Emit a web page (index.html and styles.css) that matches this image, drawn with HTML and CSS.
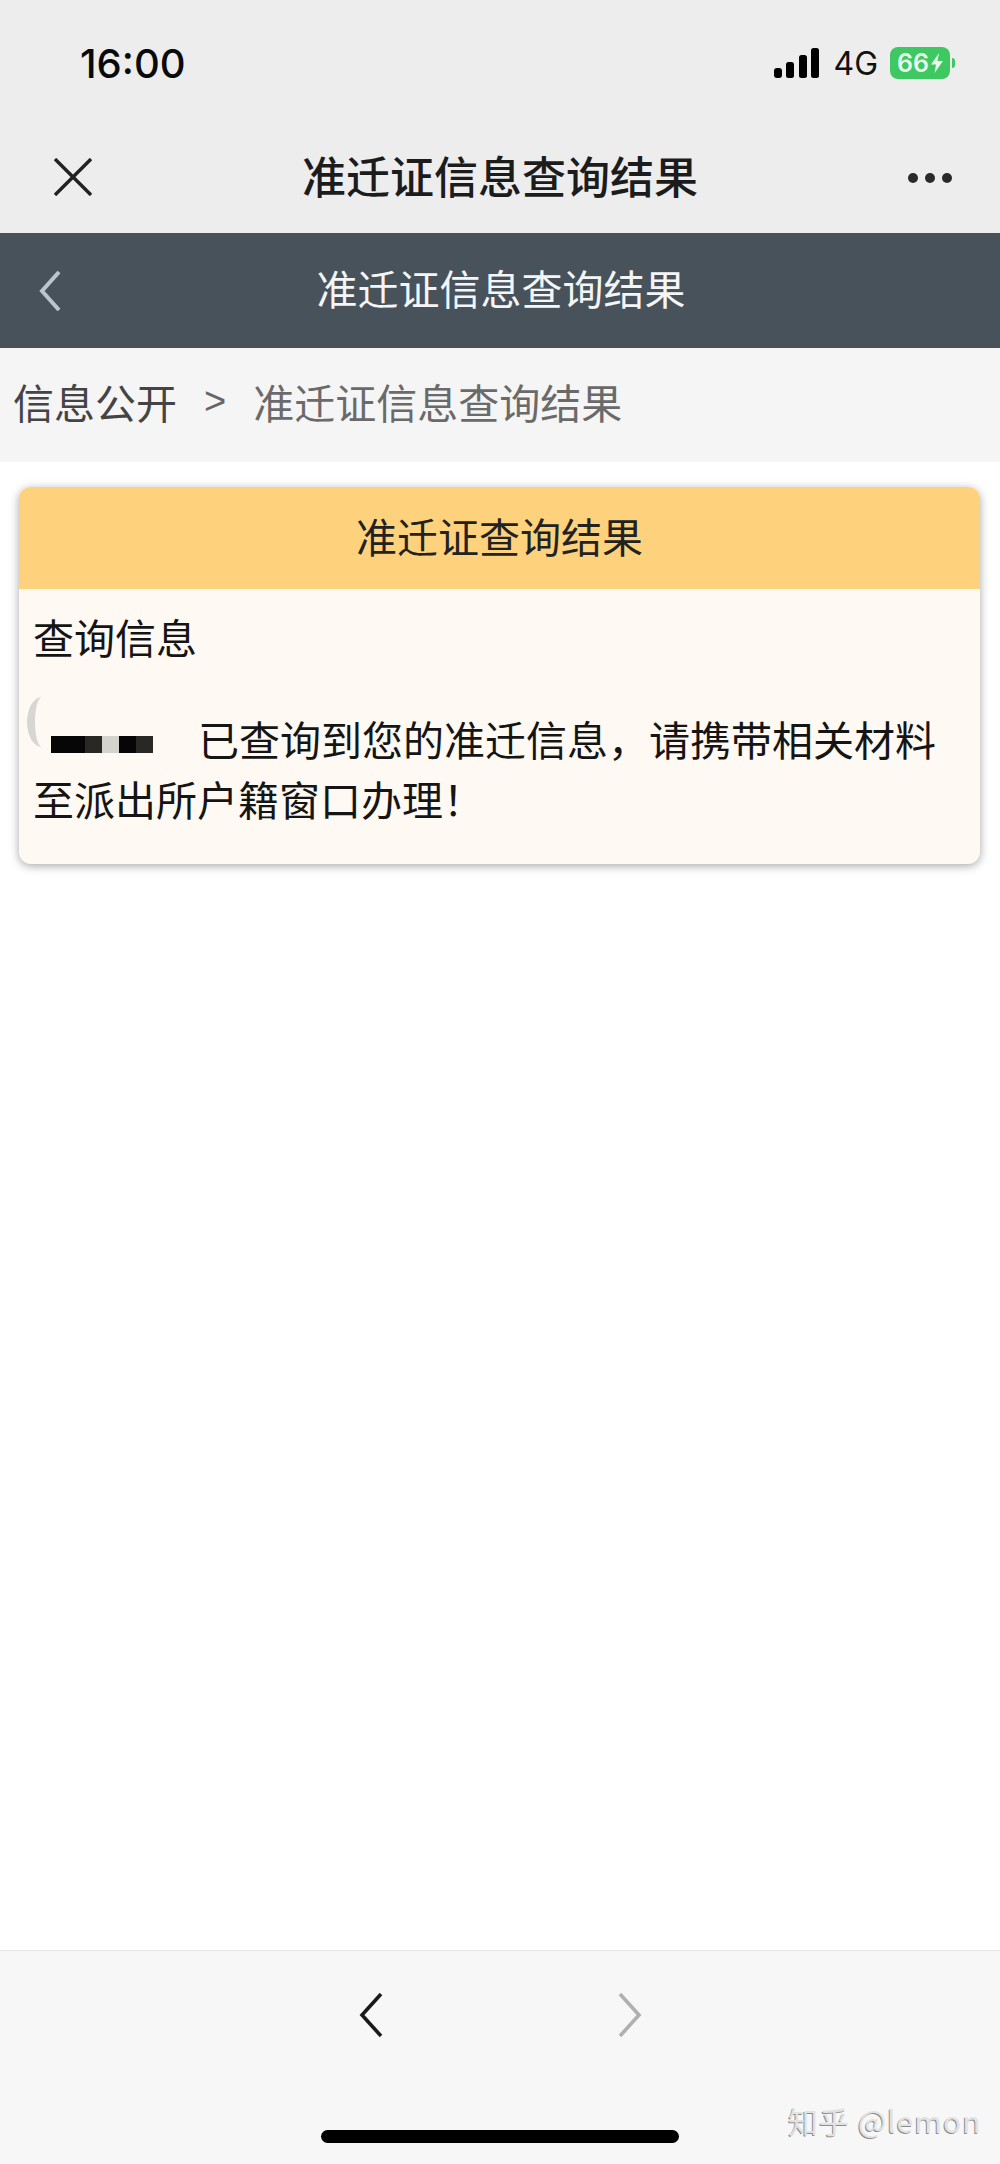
FILE: index.html
```html
<!DOCTYPE html>
<html lang="zh-CN">
<head>
  <meta charset="utf-8">
  <title>准迁证信息查询结果</title>
  <link rel="stylesheet" href="styles.css">
</head>
<body>
  <div class="page">
    <header class="top">
      <div class="status">
        <span class="time">16:00</span>
        <div class="status-right">
          <svg class="signal" width="46" height="30" viewBox="0 0 46 30">
            <rect x="0" y="20" width="8" height="10" rx="3" fill="#000"/>
            <rect x="12" y="14" width="8" height="16" rx="2.5" fill="#000"/>
            <rect x="25" y="7" width="8" height="23" rx="2.5" fill="#000"/>
            <rect x="37" y="0" width="8" height="30" rx="2.5" fill="#000"/>
          </svg>
          <span class="net">4G</span>
          <div class="battery">
            <span class="battery-level">66</span>
            <svg width="12" height="20" viewBox="0 0 12 20">
              <path d="M8 0 L0 11.5 H5 L3.5 20 L12 8 H6.5 Z" fill="#e9f8ec"/>
            </svg>
          </div>
          <span class="battery-cap"></span>
        </div>
      </div>
      <div class="nav">
        <svg class="nav-close" width="38" height="38" viewBox="0 0 38 38">
          <path d="M1 1 L37 37 M37 1 L1 37" stroke="#222" stroke-width="3.4" fill="none"/>
        </svg>
        <h1 class="nav-title">准迁证信息查询结果</h1>
        <div class="nav-more"><i></i><i></i><i></i></div>
      </div>
    </header>

    <div class="titlebar">
      <svg class="titlebar-back" width="22" height="40" viewBox="0 0 22 40">
        <path d="M20 1 L3 20 L20 39" stroke="#bcc4cc" stroke-width="4" fill="none"/>
      </svg>
      <h2 class="titlebar-text">准迁证信息查询结果</h2>
    </div>

    <div class="crumbs">
      <span class="crumb-first">信息公开</span>
      <span class="crumb-sep">&gt;</span>
      <span class="crumb-last">准迁证信息查询结果</span>
    </div>

    <main class="content">
      <section class="card">
        <div class="card-head">准迁证查询结果</div>
        <div class="card-body">
          <p class="card-label">查询信息</p>
          <p class="card-text"><span class="redact"><i class="px-a"></i><i class="px-b"></i><i class="px-c"></i><i class="px-a small"></i><i class="px-b"></i></span>已查询到您的准迁信息，请携带相关材料至派出所户籍窗口办理！</p>
          <span class="smudge"></span>
        </div>
      </section>
    </main>

    <footer class="toolbar">
      <div class="toolbar-arrows">
        <svg width="24" height="44" viewBox="0 0 24 44">
          <path d="M22 1 L3 22 L22 43" stroke="#1a1a1a" stroke-width="3.6" fill="none"/>
        </svg>
        <svg width="24" height="44" viewBox="0 0 24 44">
          <path d="M2 1 L21 22 L2 43" stroke="#b0b0b0" stroke-width="3.6" fill="none"/>
        </svg>
      </div>
      <div class="home-bar"></div>
      <span class="watermark">知乎 @lemon</span>
    </footer>
  </div>
</body>
</html>
```

FILE: styles.css
```css
* {
  box-sizing: border-box;
}
body {
  margin: 0;
  background-color: #fff;
  color: #111;
  font-family: "Noto Sans CJK SC", "Liberation Sans", sans-serif;
}
h1, h2, p {
  margin: 0;
  font-weight: normal;
}
.page {
  width: 1000px;
  height: 2164px;
  display: flex;
  flex-direction: column;
  overflow: hidden;
}

/* status bar + wechat nav */
.top {
  height: 233px;
  background-color: #ededed;
}
.status {
  height: 126px;
  padding: 0 45px 0 80px;
  display: flex;
  align-items: center;
  justify-content: space-between;
}
.time {
  font-family: Inter, sans-serif;
  font-size: 40px;
  font-weight: 500;
  color: #0a0a0a;
}
.status-right {
  display: flex;
  align-items: center;
}
.signal {
  margin-right: 13px;
}
.net {
  font-family: Inter, sans-serif;
  font-size: 32px;
  color: #111;
  margin-right: 12px;
}
.battery {
  width: 60px;
  height: 32px;
  border-radius: 8px;
  background-color: #3ec862;
  display: flex;
  align-items: center;
  justify-content: center;
  gap: 2px;
}
.battery-level {
  font-family: Inter, sans-serif;
  font-size: 25px;
  font-weight: 600;
  line-height: 1;
  color: #e9f8ec;
}
.battery-cap {
  width: 3px;
  height: 10px;
  margin-left: 2px;
  border-radius: 0 3px 3px 0;
  background-color: #3ec862;
}
.nav {
  height: 107px;
  padding: 0 48px 10px 54px;
  display: flex;
  align-items: center;
  justify-content: space-between;
}
.nav-close {
  margin-top: 4px;
}
.nav-more {
  margin-top: 6px;
  display: flex;
  gap: 7px;
}
.nav-title {
  font-size: 44px;
  font-weight: 500;
  color: #1c1c1c;
  line-height: 60px;
}
.nav-more i {
  width: 10px;
  height: 10px;
  border-radius: 50%;
  background-color: #2a2a2a;
}

.titlebar {
  height: 115px;
  padding-left: 39px;
  background-color: #48525b;
  display: flex;
  align-items: center;
  position: relative;
}
.titlebar-text {
  position: absolute;
  left: 0;
  right: 0;
  top: 24px;
  text-align: center;
  font-size: 41px;
  color: #f4f5f6;
  line-height: 60px;
  padding-left: 2px;
}

.crumbs {
  height: 114px;
  padding: 0 0 8px 13px;
  background-color: #f5f5f5;
  display: flex;
  align-items: center;
  font-size: 41px;
}
.crumb-first {
  color: #444;
}
.crumb-sep {
  margin: 0 27px 0 27px;
  color: #666;
  font-family: "Liberation Sans", sans-serif;
  font-size: 38px;
}
.crumb-last {
  color: #6a6a6a;
}

/* result card */
.content {
  flex: 1;
  padding: 25px 20px 0 19px;
  background-color: #fff;
}
.card {
  height: 377px;
  border-radius: 12px;
  overflow: hidden;
  background-color: #fefaf3;
  box-shadow: 0 2px 10px rgba(0, 0, 0, 0.35);
}
.card-head {
  height: 102px;
  background-color: #fed27c;
  text-align: center;
  font-size: 41px;
  line-height: 96px;
  color: #222;
}
.card-body {
  padding: 17px 14px 0;
  font-size: 41px;
  line-height: 60px;
  color: #151515;
  position: relative;
}
.card-label {
  margin-bottom: 42px;
}
.redact {
  display: inline-flex;
  vertical-align: 3px;
  margin: 0 45px 0 18px;
}
.redact i {
  width: 17px;
  height: 17px;
}
.redact .px-a {
  width: 34px;
  background-color: #060606;
}
.redact .px-a.small {
  width: 17px;
}
.redact .px-b {
  background-color: #2a2825;
}
.redact .px-c {
  background-color: #d5d3ce;
}
.smudge {
  position: absolute;
  left: 8px;
  top: 108px;
  width: 30px;
  height: 50px;
  border-left: 8px solid #d8d6d2;
  border-radius: 50%;
}

/* bottom toolbar */
.toolbar {
  height: 214px;
  border-top: 1px solid #e6e6e6;
  background-color: #f7f7f7;
  position: relative;
}
.toolbar-arrows {
  padding-top: 42px;
  display: flex;
  justify-content: center;
  gap: 235px;
  height: 179px;
}
.home-bar {
  width: 358px;
  height: 13px;
  margin: 0 auto;
  border-radius: 7px;
  background-color: #000;
}
.watermark {
  position: absolute;
  left: 788px;
  top: 150px;
  font-size: 30px;
  letter-spacing: 1px;
  line-height: 38px;
  color: #e2e2e2;
  text-shadow: -1px 1px 0 #8c8c8c;
  white-space: nowrap;
}
```
